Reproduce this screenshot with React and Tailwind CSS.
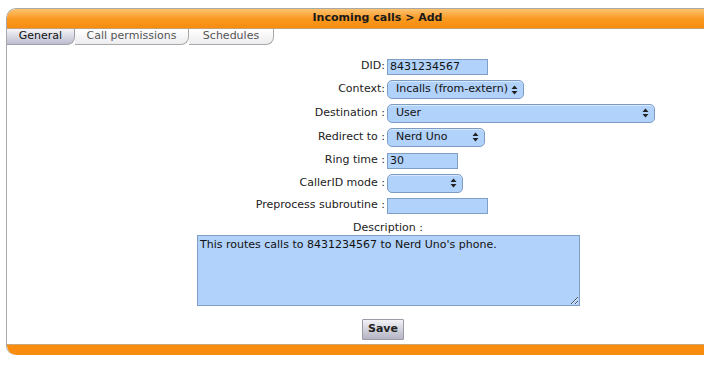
import React from "react";

const font = { fontFamily: '"DejaVu Sans", Verdana, sans-serif' };

function Arrows() {
  return (
    <svg width="7" height="10" viewBox="0 0 7 10" className="shrink-0">
      <path d="M3.5 0.5 L6.5 4 L0.5 4 Z" fill="#222" />
      <path d="M3.5 9.5 L6.5 6 L0.5 6 Z" fill="#222" />
    </svg>
  );
}

function FakeSelect({ value, width }) {
  return (
    <div
      className="h-[19px] flex items-center justify-between pl-[8px] pr-[5px] rounded-[5px] border border-[#7d9cc4] bg-[#b1d2fa] text-[11px] text-[#111] whitespace-nowrap shadow-[inset_0_1px_0_rgba(255,255,255,0.5)]"
      style={{ width }}
    >
      <span>{value}</span>
      <Arrows />
    </div>
  );
}

function TextBox({ value, width }) {
  return (
    <input
      readOnly
      defaultValue={value}
      className="h-[16px] px-[2px] border border-[#7f9fc4] bg-[#b1d2fa] text-[11px] text-[#111] leading-none outline-none"
      style={{ width, ...font }}
    />
  );
}

function Row({ label, h, children }) {
  return (
    <div className="flex items-center" style={{ height: h }}>
      <div className="w-[380px] text-right pr-[2px] text-[11px] text-[#222] whitespace-nowrap">{label}</div>
      {children}
    </div>
  );
}

export default function App() {
  return (
    <div className="w-[704px] h-[366px] bg-white overflow-hidden pt-[8px] pl-[6px]" style={font}>
      <div className="w-[720px] border-l border-t border-[#a8a8a8] rounded-tl-[10px] rounded-bl-[9px] overflow-hidden">
        {/* header */}
        <div className="h-[20px] flex items-center justify-center pl-[22px] bg-gradient-to-b from-[#fcc26a] via-[#f99a20] to-[#f78c10] border-b border-[#c8a070]">
          <span className="text-[11px] font-bold text-[#1a1a1a]">Incoming calls &gt; Add</span>
        </div>

        {/* tabs */}
        <div className="flex h-[16px] text-[11px]">
          <div className="w-[68px] flex items-center justify-center bg-gradient-to-b from-[#f4f4f8] to-[#bdbdd0] border-b border-r border-[#a0a0a8] rounded-br-[8px] text-[#111]">
            General
          </div>
          <div className="w-[114px] flex items-center justify-center bg-gradient-to-b from-[#ffffff] to-[#ededf0] border-b border-r border-[#a8a8a8] rounded-br-[8px] text-[#555]">
            Call permissions
          </div>
          <div className="w-[85px] flex items-center justify-center bg-gradient-to-b from-[#ffffff] to-[#ededf0] border-b border-r border-[#a8a8a8] rounded-br-[8px] text-[#555]">
            Schedules
          </div>
        </div>

        {/* form */}
        <div className="pt-[10px]">
          <Row label="DID:" h={23}>
            <TextBox value="8431234567" width={101} />
          </Row>
          <Row label="Context:" h={23}>
            <FakeSelect value="Incalls (from-extern)" width={137} />
          </Row>
          <Row label="Destination :" h={24}>
            <FakeSelect value="User" width={268} />
          </Row>
          <Row label="Redirect to :" h={24}>
            <FakeSelect value="Nerd Uno" width={98} />
          </Row>
          <Row label="Ring time :" h={23}>
            <TextBox value="30" width={71} />
          </Row>
          <Row label="CallerID mode :" h={22}>
            <FakeSelect value="" width={76} />
          </Row>
          <Row label="Preprocess subroutine :" h={23}>
            <TextBox value="" width={101} />
          </Row>
          <div className="h-[18px] flex items-start justify-center pt-[3px] pl-[43px] text-[11px] text-[#222]">
            <span>Description :</span>
          </div>
          <div className="pl-[190px]">
            <textarea
              readOnly
              defaultValue="This routes calls to 8431234567 to Nerd Uno's phone."
              className="block w-[383px] h-[71px] px-[2px] py-[1px] border border-[#7f9fc4] bg-[#b1d2fa] text-[11px] text-[#111] outline-none"
              style={font}
            />
          </div>
          <div className="flex pl-[355px] pt-[13px] pb-[4px]">
            <button className="w-[42px] h-[21px] border border-[#9a9aa8] bg-gradient-to-b from-[#f2f2f6] to-[#b4b4c4] text-[11px] font-bold text-[#222] rounded-[1px]">
              Save
            </button>
          </div>
        </div>

        {/* bottom bar */}
        <div className="h-[11px] bg-[#f98d10] border-t border-[#c8a878] rounded-bl-[9px]" />
      </div>
    </div>
  );
}
